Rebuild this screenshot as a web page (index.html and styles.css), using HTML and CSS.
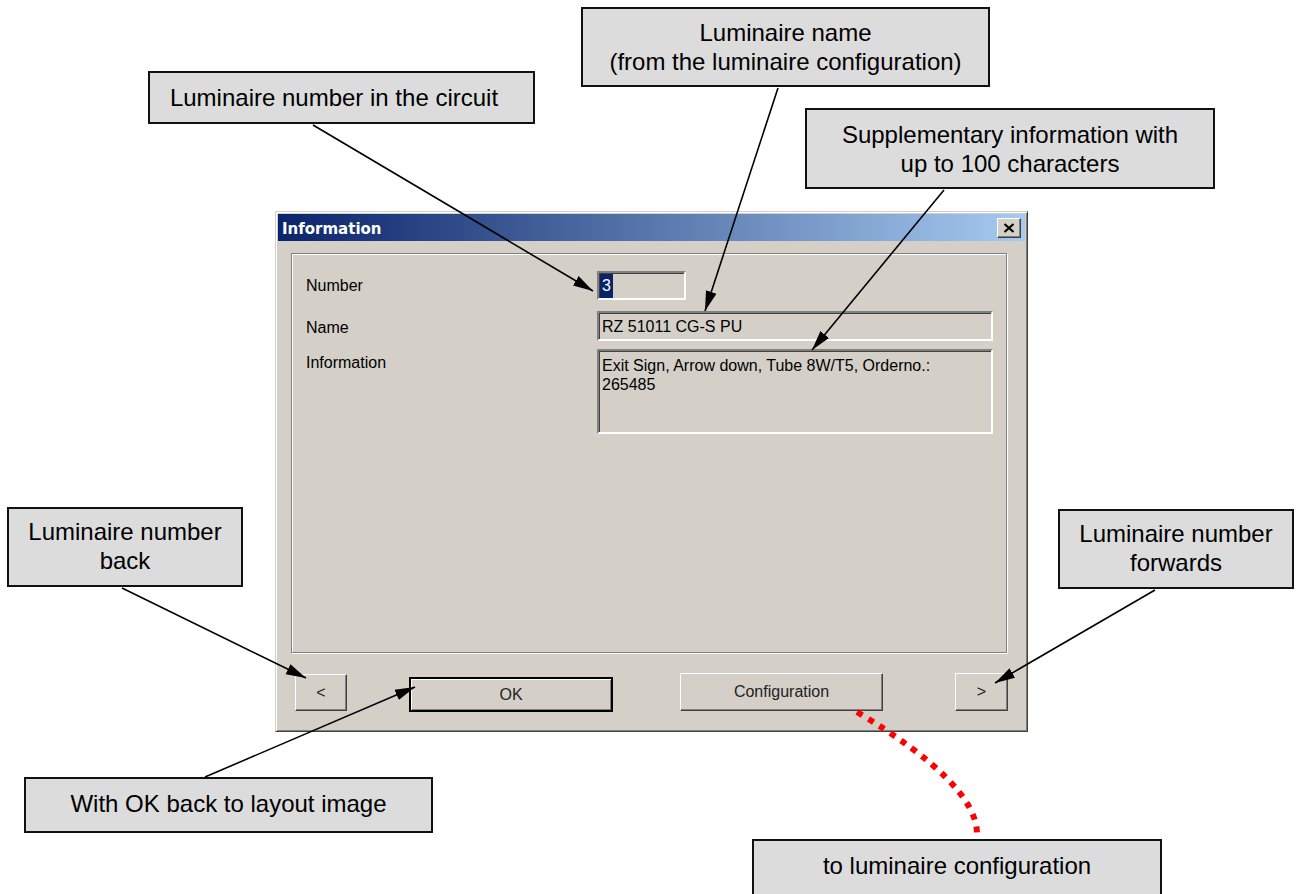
FILE: index.html
```html
<!DOCTYPE html>
<html lang="en">
<head>
  <meta charset="UTF-8">
  <title>Information dialog</title>
  <link rel="stylesheet" href="styles.css">
</head>
<body>
  <div class="canvas">
    <div class="dialog">
      <div class="titlebar">
        <span class="title">Information</span>
        <div class="close-btn">
          <svg width="12" height="10" viewBox="0 0 12 10"><path d="M1.5 1 L10.5 9 M10.5 1 L1.5 9" stroke="#000" stroke-width="2.2" fill="none"/></svg>
        </div>
      </div>
      <div class="group">
        <div class="field-row row-number">
          <div class="label">Number</div>
          <div class="edit edit-number"><span class="sel">3</span></div>
        </div>
        <div class="field-row row-name">
          <div class="label">Name</div>
          <div class="edit edit-wide">RZ 51011 CG-S PU</div>
        </div>
        <div class="field-row row-info">
          <div class="label">Information</div>
          <div class="edit edit-wide edit-multi">Exit Sign, Arrow down, Tube 8W/T5, Orderno.:<br>265485</div>
        </div>
      </div>
      <div class="actions">
        <div class="btn btn-prev">&lt;</div>
        <div class="btn btn-ok">OK</div>
        <div class="btn btn-config">Configuration</div>
        <div class="btn btn-next">&gt;</div>
      </div>
    </div>

    <!-- annotation boxes -->
    <div class="callout c-circuit">Luminaire number in the circuit</div>
    <div class="callout c-name">Luminaire name<br>(from the luminaire configuration)</div>
    <div class="callout c-info">Supplementary information with<br>up to 100 characters</div>
    <div class="callout c-back">Luminaire number<br>back</div>
    <div class="callout c-fwd">Luminaire number<br>forwards</div>
    <div class="callout c-ok">With OK back to layout image</div>
    <div class="callout c-config">to luminaire configuration</div>

    <svg class="arrows" width="1297" height="894" viewBox="0 0 1297 894">
      <defs>
        <marker id="head" markerUnits="userSpaceOnUse" markerWidth="22" markerHeight="12" refX="20" refY="6" orient="auto">
          <path d="M0 0.5 L20 6 L0 11.5 Z" fill="#000"/>
        </marker>
      </defs>
      <g stroke="#000" stroke-width="1.6" marker-end="url(#head)">
        <line x1="313" y1="125" x2="593" y2="291"/>
        <line x1="778" y1="88" x2="705" y2="311"/>
        <line x1="944" y1="190" x2="812" y2="350"/>
        <line x1="122" y1="588" x2="306" y2="678"/>
        <line x1="1155" y1="590" x2="995" y2="683"/>
        <line x1="205" y1="777" x2="415" y2="687"/>
      </g>
      <path d="M857 712 Q977 784 977 834" stroke="#f00" stroke-width="6" stroke-dasharray="6 7" fill="none"/>
    </svg>
  </div>
</body>
</html>
```

FILE: styles.css
```css
body {
  margin: 0;
  background: #fff;
  font-family: "Liberation Sans", Arial, sans-serif;
}
.canvas {
  position: relative;
  width: 1297px;
  height: 894px;
  overflow: hidden;
}

/* dialog window */
.dialog {
  position: absolute;
  left: 275px;
  top: 211px;
  width: 753px;
  height: 521px;
  box-sizing: border-box;
  padding: 2px;
  background: #d4d0c8;
  border: 1px solid;
  border-color: #d4d0c8 #404040 #404040 #d4d0c8;
  box-shadow: inset 1px 1px 0 #fff, inset -1px -1px 0 #808080;
  color: #000;
  font-size: 16px;
}
.titlebar {
  height: 27px;
  display: flex;
  align-items: center;
  justify-content: space-between;
  padding: 0 4px 0 4px;
  background: linear-gradient(to right, #0a246a, #a6caf0);
}
.title {
  font-family: "DejaVu Sans", sans-serif;
  font-weight: bold;
  font-size: 15px;
  color: #fff;
  padding-top: 2px;
}
.close-btn {
  width: 24px;
  height: 20px;
  box-sizing: border-box;
  display: flex;
  align-items: center;
  justify-content: center;
  background: #d4d0c8;
  border: 1px solid;
  border-color: #fff #404040 #404040 #fff;
  box-shadow: inset -1px -1px 0 #808080;
}

/* group box */
.group {
  margin: 12px 0 0 13px;
  width: 716px;
  height: 400px;
  box-sizing: border-box;
  border: 1px solid #808080;
  box-shadow: 1px 1px 0 #fff, inset 1px 1px 0 #fff;
  padding: 17px 0 0 14px;
}
.field-row {
  display: flex;
  align-items: center;
}
.label {
  width: 291px;
  flex-shrink: 0;
}
.row-number { margin-bottom: 11px; }
.row-number .label { padding-top: 1px; }
.row-name { margin-bottom: 8px; }
.row-name .label { padding-top: 4px; }
.row-info { align-items: flex-start; }
.row-info .label { padding-top: 5px; }

.edit {
  box-sizing: border-box;
  border: 2px solid;
  border-color: #808080 #fff #fff #808080;
  box-shadow: inset 1px 1px 0 #404040;
  background: #d4d0c8;
  padding: 0 3px;
  line-height: 19px;
}
.edit-number {
  width: 89px;
  height: 29px;
  padding: 1px 0 0 1px;
}
.sel {
  display: inline-block;
  background: #0a246a;
  color: #fff;
  line-height: 24px;
  padding: 0 2px;
}
.edit-wide {
  width: 396px;
  height: 30px;
  display: flex;
  align-items: center;
}
.edit-multi {
  display: block;
  height: 85px;
  padding-top: 5px;
}

/* buttons */
.actions {
  display: flex;
  align-items: flex-start;
  margin-top: 20px;
}
.btn {
  box-sizing: border-box;
  display: flex;
  align-items: center;
  justify-content: center;
  background: #d4d0c8;
  border: 1px solid;
  border-color: #fff #404040 #404040 #fff;
  box-shadow: inset -1px -1px 0 #808080;
  color: #222;
}
.btn-prev {
  margin: 1px 0 0 17px;
  width: 52px;
  height: 37px;
}
.btn-ok {
  margin: 4px 0 0 62px;
  width: 204px;
  height: 35px;
  border: 2px solid #000;
  box-shadow: inset 1px 1px 0 #fff, inset -1px -1px 0 #808080;
}
.btn-config {
  margin-left: 67px;
  width: 203px;
  height: 38px;
}
.btn-next {
  margin-left: 72px;
  width: 53px;
  height: 38px;
}

/* annotation callouts */
.callout {
  position: absolute;
  box-sizing: border-box;
  display: flex;
  align-items: center;
  justify-content: center;
  text-align: center;
  background: #dcdcdc;
  border: 2px solid #111;
  font-size: 24px;
  line-height: 29px;
  color: #000;
}
.c-circuit { left: 148px; top: 71px; width: 387px; height: 53px; padding-right: 15px; }
.c-name { left: 581px; top: 7px; width: 409px; height: 80px; }
.c-info { left: 805px; top: 108px; width: 410px; height: 81px; }
.c-back { left: 7px; top: 507px; width: 236px; height: 80px; padding-bottom: 2px; }
.c-fwd { left: 1058px; top: 509px; width: 236px; height: 80px; padding-bottom: 2px; }
.c-ok { left: 24px; top: 777px; width: 409px; height: 56px; padding-bottom: 4px; }
.c-config { left: 752px; top: 839px; width: 410px; height: 60px; align-items: flex-start; padding-top: 10px; }

.arrows {
  position: absolute;
  left: 0;
  top: 0;
  pointer-events: none;
}
```
